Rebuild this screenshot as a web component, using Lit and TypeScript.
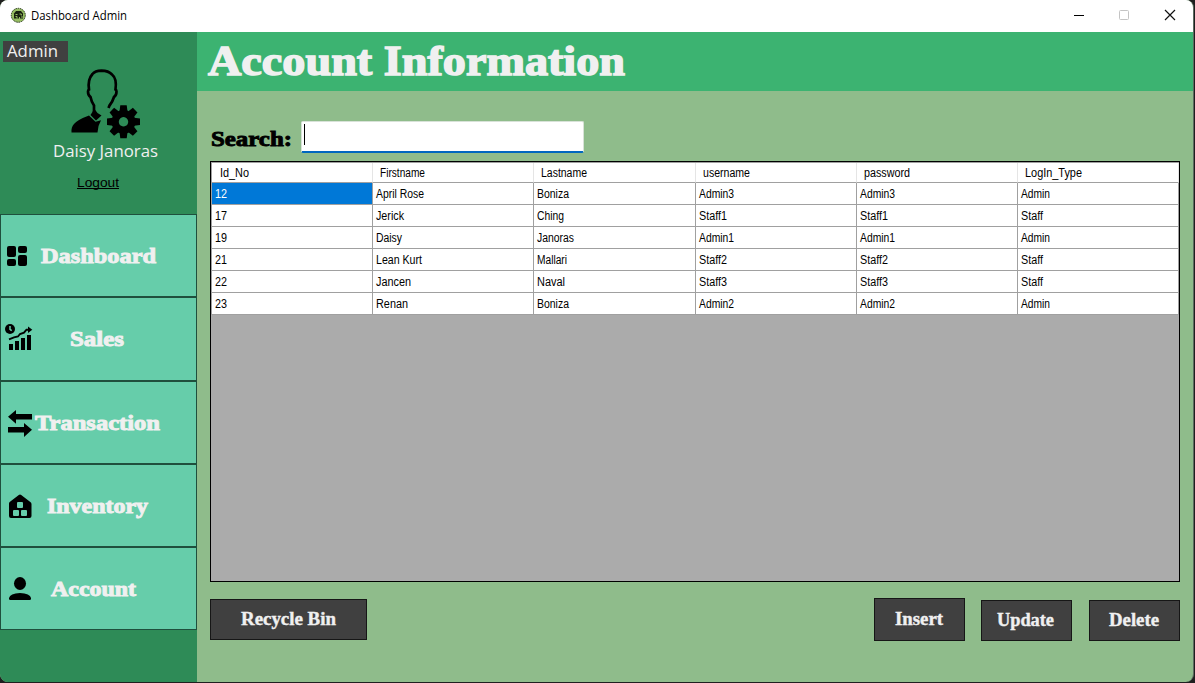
import { LitElement, html, svg, css } from "lit";
import { customElement, property } from "lit/decorators.js";
import { classMap } from "lit/directives/class-map.js";

/** A line of text set to an exact width; the bottom edge of the box is the baseline. */
@customElement("fit-text")
class FitText extends LitElement {
  @property() text = "";
  @property({ type: Number }) w = 50;
  @property({ type: Number }) size = 11;
  static styles = css`
    :host { display: block; flex: none; }
    svg { display: block; overflow: visible; }
    text { fill: currentColor; white-space: pre; stroke: currentColor; stroke-width: var(--weight, 0); }
  `;
  render() {
    return html`<svg width=${this.w} height=${this.size}>
      <text x="0" y=${this.size} font-size=${this.size} textLength=${this.w} lengthAdjust="spacingAndGlyphs">${this.text}</text>
    </svg>`;
  }
}

const icons = {
  dashboard: svg`<g><rect x="7" y="36" width="9" height="11" rx="2"/><rect x="18" y="36" width="9" height="7" rx="2"/><rect x="7" y="49" width="9" height="7" rx="2"/><rect x="18" y="45" width="9" height="11" rx="2"/></g>`,
  sales: svg`<g><circle cx="10" cy="32" r="5"/><path d="M10 29v3.300l1.700 1.400" fill="none" stroke="#66cdaa" stroke-width="1.500"/>
    <path d="M9 42.300l5-2 4-.8 2-2.500 4-1.300 2.500-3H30" fill="none" stroke="#000" stroke-width="1.900"/><path d="M28 29.500l4.300 3.300-4.300 3.300z"/>
    <path d="M9 47h4v6H9zM15 44h4v9h-4zM21 41h4v12h-4zM27 38h4v15h-4z"/></g>`,
  transaction: svg`<path d="M8 35.700l8-6.700v4H32v5.500H16v4.300zM32 48.700l-8-6.700v4H8v5.500h16V56z"/>`,
  inventory: svg`<g><path d="M9 39.500q0-1 1-1.700l8.800-6.800q1.200-.8 2.400 0l8.800 6.800q1.500 1 1.500 2.200V52q0 2-2 2H11q-2 0-2-2z"/><g fill="#66cdaa"><rect x="17" y="38" width="6" height="6" rx="1"/><rect x="13" y="46" width="6" height="6" rx="1"/><rect x="21" y="46" width="6" height="6" rx="1"/></g></g>`,
  account: svg`<g><ellipse cx="20" cy="36.500" rx="6" ry="6.500"/><path d="M9 51q1-4.500 11-5 10 .5 11 5v1q0 1-1.500 1h-19Q9 53 9 52z"/></g>`,
};

const nav = [
  { text: "Dashboard", x: 41, w: 115, icon: icons.dashboard, tall: false, dy: -4 },
  { text: "Sales", x: 70, w: 54, icon: icons.sales, tall: true, dy: 0 },
  { text: "Transaction", x: 35, w: 125, icon: icons.transaction, tall: false, dy: 0 },
  { text: "Inventory", x: 47, w: 101, icon: icons.inventory, tall: false, dy: 0 },
  { text: "Account", x: 51, w: 85, icon: icons.account, tall: false, dy: 0 },
];

const columns: [string, number][] = [
  ["Id_No", 29], ["Firstname", 45], ["Lastname", 46], ["username", 47], ["password", 46], ["LogIn_Type", 57],
];
const rows = [
  ["12", "April Rose", "Boniza", "Admin3", "Admin3", "Admin"],
  ["17", "Jerick", "Ching", "Staff1", "Staff1", "Staff"],
  ["19", "Daisy", "Janoras", "Admin1", "Admin1", "Admin"],
  ["21", "Lean Kurt", "Mallari", "Staff2", "Staff2", "Staff"],
  ["22", "Jancen", "Naval", "Staff3", "Staff3", "Staff"],
  ["23", "Renan", "Boniza", "Admin2", "Admin2", "Admin"],
];
const widths: Record<string, number> = {
  "April Rose": 48, Jerick: 28, Daisy: 26, "Lean Kurt": 46, Jancen: 35, Renan: 32,
  Boniza: 32, Ching: 27, Janoras: 37, Mallari: 30, Naval: 28,
  Admin: 29, Staff: 22, Admin1: 35, Admin2: 35, Admin3: 35, Staff1: 28, Staff2: 28, Staff3: 28,
};

const tooth = (a: number) => svg`<path transform="rotate(${a})" d="M-4-10.500L-3.200-16.500H3.200L4-10.500z"/>`;

@customElement("app-root")
class AppRoot extends LitElement {
  static styles = css`
    :host { display: block; width: 1195px; height: 683px; background: #1f1f1f; overflow: hidden; font-family: "Liberation Sans", Arial, sans-serif; }
    * { box-sizing: border-box; }
    .window { width: 1194px; height: 682px; border-radius: 8px; overflow: hidden; border-right: 1px solid #5c6b60; background: #8fbc8b; display: grid; grid-template: 32px 650px / 197px 1fr; }
    .titlebar { grid-column: 1 / 3; background: #fff; display: flex; color: #000; }
    .app-icon { margin: 7px 4px 0 10px; flex: none; }
    .caption { font-family: "Open Sans", sans-serif; margin-top: 8px; }
    .controls { margin-left: auto; flex: none; }
    .side { background: #2e8b57; display: flex; flex-direction: column; }
    .profile { height: 182px; padding-top: 9px; }
    .role { width: 65px; height: 21px; margin-left: 3px; background: #404040; color: #f0f0f0; padding-left: 4px; display: flex; align-items: flex-start; font-family: "Open Sans", sans-serif; }
    .role fit-text { margin-top: -1px; }
    .avatar { display: block; margin: 6px 0 0 70px; }
    .person { margin-left: 53px; color: #f0f0f0; font-family: "Open Sans", sans-serif; }
    .logout { margin: 17px 0 0 77px; width: 42px; height: 15px; border-bottom: 1px solid #000; color: #000; padding-bottom: 1px; }
    .didone { font-family: "Liberation Serif", serif; font-weight: bold; --weight: 0.9px; }
    .nav { height: 83px; background: #66cdaa; border: 1px solid #1f4f3d; color: #f0f0f0; display: flex; }
    .nav.tall { height: 84px; }
    .nav fit-text { margin-top: 28px; }
    .glyph { margin: -1px 0 0 -1px; flex: none; width: 34px; height: 82px; overflow: visible; }
    .main { display: flex; flex-direction: column; }
    .head { height: 59px; background: #3cb371; color: #f0f0f0; padding: 0 0 0 11px; }
    .head fit-text { --weight: 1.5px; }
    .search { height: 70px; padding: 30px 0 0 14px; display: flex; color: #000; }
    .search fit-text { margin-top: 4px; }
    .field { margin-left: 9px; width: 283px; height: 32px; background: #fff; border: 1px solid #d8e2d8; border-bottom: 2px solid #0067c0; border-radius: 2px; padding: 2px 0 0 2px; }
    .caret { width: 1px; height: 21px; background: #000; }
    .grid { margin-left: 13px; width: 970px; height: 421px; flex: none; border: 1px solid #000; background: #ababab; }
    .rows { border: solid #a0a0a0; border-width: 1px 0 0 1px; }
    .row { display: grid; grid-template-columns: 161px 161px 162px 161px 161px 161px; width: 967px; }
    .cell { height: 22px; border-right: 1px solid #a0a0a0; border-bottom: 1px solid #a0a0a0; background: #fff; color: #000; padding: 3px 0 0 3px; }
    .cell.th { height: 20px; padding: 2px 0 0 7px; border-right-color: #e5e5e5; }
    .cell.th:first-child { padding-left: 8px; }
    .cell.sel { background: #0078d7; color: #fff; }
    .actions { display: flex; padding: 16px 0 0 13px; }
    .btn { background: #404040; border: 1px solid #161616; color: #f0f0f0; height: 41px; width: 91px; margin-top: 2px; display: flex; justify-content: center; padding: 7px 2px 0 0; --weight: 0.4px; }
    .btn.bin { width: 157px; margin: 1px 507px 0 0; padding-right: 1px; }
    .btn.insert { height: 43px; margin: 0 16px 0 0; padding-top: 8px; }
    .btn.update { margin-right: 17px; }
  `;

  render() {
    return html`<div class="window">
      <div class="titlebar">
        <svg class="app-icon" width="17" height="17" viewBox="0 0 17 17">
          <circle cx="8.300" cy="8.300" r="7" fill="#96bd63" stroke="#26351b" stroke-dasharray="1.500 .8"/>
          <path d="M4 6.500L6 4h5l2 2.500v5H4z" fill="#17200f"/>
          <path d="M5.500 7.500h2M5.500 9.500h1.500v2M9.500 7h1.800v1.500M9.500 10v2M12 9v2" stroke="#96bd63" fill="none"/>
        </svg>
        <fit-text class="caption" text="Dashboard Admin" w="96" size="12"></fit-text>
        <svg class="controls" width="144" height="32" fill="none">
          <path d="M25 15.500h10" stroke="#000"/>
          <rect x="70.500" y="10.500" width="9" height="9" rx="1" stroke="#c4c4c4"/>
          <path d="M116 10l10 10M126 10l-10 10" stroke="#111" stroke-width="1.200"/>
        </svg>
      </div>
      <div class="side">
        <div class="profile">
          <div class="role"><fit-text text="Admin" w="51" size="17"></fit-text></div>
          <svg class="avatar" width="72" height="72" viewBox="70 68 72 72">
            <path d="M94 112v-6.500q-2.500-3.500-3.500-8.500-2.500-1.500-2.500-5.500 0-1.500 1-2-1.500-10 3.500-15.500 2.500-3 9-3.300 7 .1 10.500 3.800 5 4 3.500 15 1 .5 1 2 0 4-2.500 5.500-1.500 5-4.500 8.500l-1 2.500" fill="none" stroke="#000" stroke-width="2.700"/>
            <path d="M93 108v3l-2.500 4 5.500 5.500 5.500-5-4-2.500-3-4z"/>
            <path d="M71.500 132.500q-.5-5.500 2.500-8.500 4-4.500 15-8.500l6.500 6.300 5.500-1.500q-3 5-3.500 12.200z"/>
            <g transform="translate(123.500 121.800)"><path fill-rule="evenodd" d="M0-12A12 12 0 1 1-.01-12zM0-4.700A4.700 4.700 0 1 0 .01-4.700z"/>${[0, 45, 90, 135, 180, 225, 270, 315].map(tooth)}</g>
          </svg>
          <fit-text class="person" text="Daisy Janoras" w="105" size="17"></fit-text>
          <div class="logout"><fit-text text="Logout" w="42" size="13"></fit-text></div>
        </div>
        ${nav.map(n => html`<div class=${classMap({ nav: true, didone: true, tall: n.tall })}>
          <svg class="glyph" width="34" height="82" viewBox="0 ${-n.dy} 34 82">${n.icon}</svg>
          <fit-text style="margin-left:${n.x - 34}px" text=${n.text} w=${n.w} size="20"></fit-text>
        </div>`)}
      </div>
      <div class="main">
        <div class="head didone"><fit-text text="Account Information" w="417" size="43"></fit-text></div>
        <div class="search didone">
          <fit-text text="Search:" w="81" size="21"></fit-text>
          <div class="field"><div class="caret"></div></div>
        </div>
        <div class="grid"><div class="rows">
          <div class="row">${columns.map(([t, w]) => html`<div class="cell th"><fit-text text=${t} w=${w} size="12"></fit-text></div>`)}</div>
          ${rows.map((r, i) => html`<div class="row">${r.map((t, j) => html`<div class=${classMap({ cell: true, sel: i === 0 && j === 0 })}><fit-text text=${t} w=${widths[t] ?? 12} size="12"></fit-text></div>`)}</div>`)}
        </div></div>
        <div class="actions didone">
          <div class="btn bin"><fit-text text="Recycle Bin" w="95" size="18"></fit-text></div>
          <div class="btn insert"><fit-text text="Insert" w="48" size="18"></fit-text></div>
          <div class="btn update"><fit-text text="Update" w="57" size="18"></fit-text></div>
          <div class="btn"><fit-text text="Delete" w="50" size="18"></fit-text></div>
        </div>
      </div>
    </div>`;
  }
}
